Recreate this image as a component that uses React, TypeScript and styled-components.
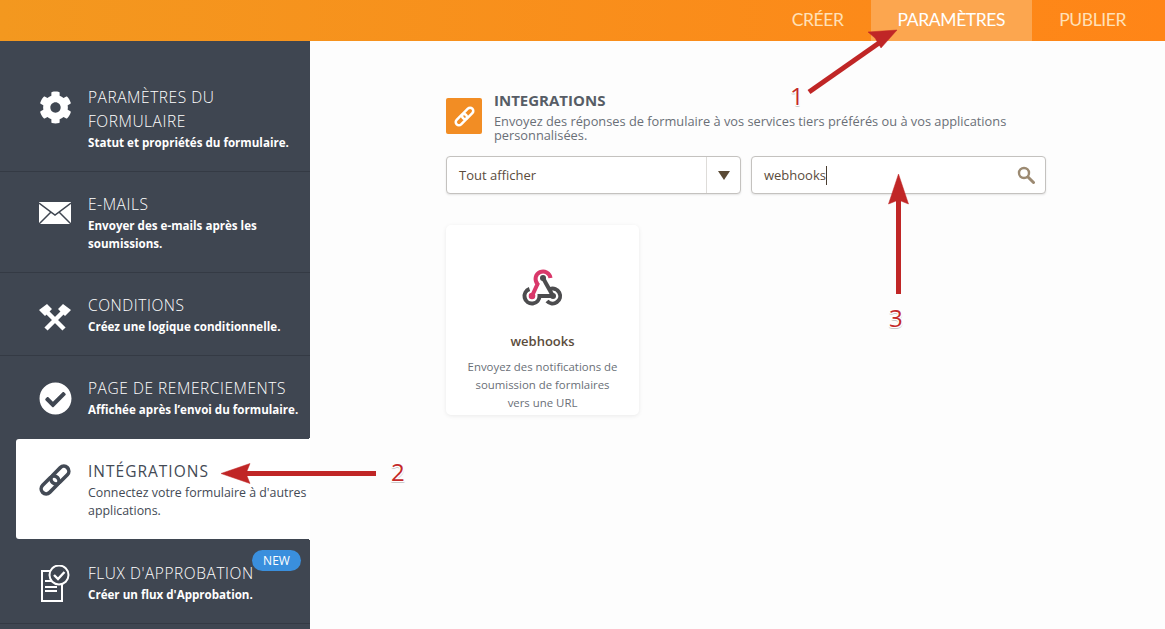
import React from "react";
import styled, { createGlobalStyle } from "styled-components";
import { FaCog, FaCheckCircle } from "react-icons/fa";

const Global = createGlobalStyle`
  html, body { margin: 0; padding: 0; height: 100%; overflow: hidden; background: #fdfdfd; }
  body { font-family: "Open Sans", "Liberation Sans", sans-serif; }
  #root { height: 100%; }
`;

const Page = styled.div`
  position: relative;
  width: 1165px;
  height: 629px;
  overflow: hidden;
  display: flex;
  flex-direction: column;
`;

const TopBar = styled.header`
  flex: 0 0 41px;
  display: flex;
  justify-content: flex-end;
  background: linear-gradient(90deg, #f3981f 0%, #ff8517 100%);
`;

const Tab = styled.div<{ $active?: boolean; $last?: boolean }>`
  display: flex;
  align-items: center;
  padding: 0 ${(p) => (p.$last ? "39px" : "27px")} 2px 27px;
  font-family: "Lato", "Open Sans", sans-serif;
  font-size: 17.5px;
  letter-spacing: -0.4px;
  color: ${(p) => (p.$active ? "#fff" : "#ffe0b8")};
  background: ${(p) => (p.$active ? "#fca64f" : "transparent")};
`;

const Body = styled.div`
  flex: 1;
  display: flex;
  min-height: 0;
`;

const Sidebar = styled.nav`
  flex: 0 0 310px;
  background: #3f4651;
  display: flex;
  flex-direction: column;
`;

const Item = styled.div<{ $active?: boolean; $flat?: boolean; $h: number; $top: number }>`
  position: relative;
  box-sizing: border-box;
  height: ${(p) => p.$h}px;
  display: flex;
  padding: ${(p) => p.$top}px 0 0 ${(p) => (p.$active ? "22px" : "38px")};
  margin-left: ${(p) => (p.$active ? "16px" : "0")};
  gap: 16px;
  background: ${(p) => (p.$active ? "#fff" : "transparent")};
  border-radius: ${(p) => (p.$active ? "3px 0 0 3px" : "0")};
  border-bottom: ${(p) => (p.$active || p.$flat ? "none" : "1px solid #343a44")};
  color: ${(p) => (p.$active ? "#434a55" : "#fff")};

  ${(p) =>
    p.$active
      ? `
    &::before, &::after {
      content: "";
      position: absolute;
      right: 0;
      width: 3px;
      height: 3px;
    }
    &::before {
      top: -3px;
      background: radial-gradient(circle at 0 0, transparent 3px, #fdfdfd 3px);
    }
    &::after {
      bottom: -3px;
      background: radial-gradient(circle at 0 100%, transparent 3px, #fdfdfd 3px);
    }
  `
      : ""}
`;

const IconBox = styled.div<{ $offset: number }>`
  flex: 0 0 34px;
  width: 34px;
  height: 34px;
  margin-top: ${(p) => p.$offset}px;
  display: flex;
  align-items: center;
  justify-content: center;
  font-size: 33px;
`;

const ItemText = styled.div`
  flex: 1;
  min-width: 0;
`;

const ItemTitle = styled.div<{ $active?: boolean }>`
  font-size: 15.5px;
  line-height: 24px;
  letter-spacing: ${(p) => (p.$active ? "1px" : "0.55px")};
  font-weight: ${(p) => (p.$active ? 400 : 300)};
  color: ${(p) => (p.$active ? "#434a55" : "#fff")};
`;

const ItemDesc = styled.div<{ $active?: boolean }>`
  margin-top: 1px;
  font-size: ${(p) => (p.$active ? "12.4px" : "11.6px")};
  line-height: 18px;
  font-weight: ${(p) => (p.$active ? 400 : 700)};
  color: ${(p) => (p.$active ? "#434a55" : "#fff")};
`;

const NewBadge = styled.span`
  position: absolute;
  right: 9px;
  top: 11px;
  width: 49px;
  height: 21px;
  border-radius: 11px;
  background: #3a8fdd;
  color: #fff;
  font-size: 12px;
  line-height: 21px;
  text-align: center;
`;

const Main = styled.main`
  flex: 1;
  padding: 50px 0 0 136px;
  background: #fdfdfd;
`;

const Column = styled.div`
  width: 600px;
`;

const Heading = styled.div`
  display: flex;
  gap: 12px;
`;

const HeadIcon = styled.div`
  flex: 0 0 36px;
  height: 36px;
  margin-top: 7px;
  border-radius: 2px;
  background: #f28d24;
  color: #fff;
  display: flex;
  align-items: center;
  justify-content: center;
`;

const HeadTitle = styled.div`
  font-size: 15px;
  font-weight: 700;
  line-height: 19px;
  color: #575d66;
`;

const HeadText = styled.div`
  font-size: 12.8px;
  line-height: 14px;
  color: #6a6f77;
  margin-top: 4px;
`;

const Controls = styled.div`
  display: flex;
  gap: 10px;
  margin-top: 14px;
`;

const Field = styled.div<{ $w: number }>`
  box-sizing: border-box;
  width: ${(p) => p.$w}px;
  height: 38px;
  background: #fff;
  border: 1px solid #c4c2bf;
  border-radius: 4px;
  box-shadow: 0 1px 2px rgba(0, 0, 0, 0.1);
  display: flex;
  align-items: center;
  font-size: 13px;
  color: #5b4c3c;
`;

const FieldText = styled.div`
  flex: 1;
  padding-left: 12px;
  display: flex;
  align-items: center;
`;

const Caret = styled.span`
  width: 1px;
  height: 19px;
  background: #4a3d30;
`;

const CaretBox = styled.div`
  flex: 0 0 33px;
  height: 100%;
  border-left: 1px solid #dedcd9;
  display: flex;
  align-items: center;
  justify-content: center;
`;

const Triangle = styled.div`
  width: 0;
  height: 0;
  border-left: 6px solid transparent;
  border-right: 6px solid transparent;
  border-top: 9px solid #5a4a35;
`;

const SearchIcon = styled.svg`
  width: 18px;
  height: 18px;
  margin-right: 10px;
`;

const Card = styled.div`
  box-sizing: border-box;
  width: 193px;
  height: 190px;
  margin-top: 31px;
  background: #fff;
  border-radius: 5px;
  box-shadow: 0 1px 4px rgba(0, 0, 0, 0.08);
  text-align: center;
  padding-top: 39px;
  overflow: hidden;
`;

const CardName = styled.div`
  margin-top: 15px;
  font-size: 13px;
  font-weight: 600;
  line-height: 18px;
  color: #5b4c3c;
`;

const CardText = styled.div`
  margin-top: 8px;
  font-size: 11.4px;
  line-height: 18px;
  color: #6a6f77;
  padding: 0 18px;
`;

const Overlay = styled.svg`
  position: absolute;
  inset: 0;
  width: 1165px;
  height: 629px;
  pointer-events: none;
`;

const Marker = styled.div<{ $x: number; $y: number }>`
  position: absolute;
  left: ${(p) => p.$x}px;
  top: ${(p) => p.$y}px;
  font-family: "Open Sans", sans-serif;
  font-weight: 500;
  font-size: 24px;
  line-height: 28px;
  color: #c42a2a;
  text-shadow: 1px 0 0 #fff, -1px 0 0 #fff, 0 -1px 0 #fff, 0 1px 0 #fff, 1px 1px 0 #fff, -1px 1px 0 #fff,
    0 2px 0 #c9c9c9, 1px 2px 0 #d8d8d8, -1px 2px 0 #d8d8d8;
`;

const Envelope = () => (
  <svg width="32" height="22" viewBox="0 0 32 22">
    <rect width="32" height="22" fill="#fff" />
    <path fill="none" stroke="#3f4651" strokeWidth="1.500" d="M0 1l16 12L32 1M0 22l12-12M32 22L20 10" />
  </svg>
);

const Tools = () => (
  <svg width="32" height="27" viewBox="0 0 32 27" fill="#fff">
    <path stroke="#fff" strokeWidth="4.500" d="M7 7l18 18M25 7L7 25" />
    <path d="M8 0l5 5-7 7-6-6zM24 0l-5 5 7 7 6-6z" />
  </svg>
);

const ChainIcon = ({ size, weight }: { size: number; weight: number }) => (
  <svg width={size} height={size} viewBox="0 0 30 30" fill="none" stroke="currentColor" strokeWidth={weight} overflow="visible">
    <g transform="rotate(-45 15 15)">
      <rect x="-2.500" y="10" width="21" height="10" rx="5" />
      <rect x="11.500" y="10" width="21" height="10" rx="5" />
    </g>
  </svg>
);

const Approval = () => (
  <svg width="32" height="37" viewBox="0 0 32 37" fill="none" stroke="#fff">
    <rect x="3" y="6" width="20" height="30" strokeWidth="2" />
    <path strokeWidth="1.800" d="M6 16h7M6 22h12M6 26h12" />
    <circle cx="20" cy="10" r="9.500" strokeWidth="2" fill="#3f4651" />
    <path strokeWidth="2.400" d="M15 10l4 4 6.500-7" />
  </svg>
);

const WebhookIcon = () => (
  <svg width="48" height="48" viewBox="0 0 48 48" fill="none">
    <path stroke="#4c4c4e" strokeWidth="4" d="M24 14l10 18" />
    <path stroke="#4c4c4e" strokeWidth="4" d="M10.500 25A7.500 7.500 0 1 0 20.500 32H34" />
    <path stroke="#4c4c4e" strokeWidth="4" d="M31 25A7.500 7.500 0 1 1 28 37" />
    <circle cx="24" cy="14" r="3" fill="#4c4c4e" />
    <circle cx="34" cy="32" r="3" fill="#4c4c4e" />
    <path stroke="#d9386a" strokeWidth="4" d="M13 32l5.500-12A7.500 7.500 0 1 1 31.500 14" />
    <circle cx="13" cy="32" r="3.300" fill="#d9386a" />
  </svg>
);

type Row = {
  title: string;
  desc: string;
  h: number;
  top: number;
  iconOffset: number;
  icon: React.ReactNode;
  active?: boolean;
  badge?: boolean;
  flat?: boolean;
};

const rows: Row[] = [
  { title: "PARAMÈTRES DU FORMULAIRE", desc: "Statut et propriétés du formulaire.", h: 131, top: 44, iconOffset: 5, icon: <FaCog /> },
  { title: "E-MAILS", desc: "Envoyer des e-mails après les soumissions.", h: 101, top: 20, iconOffset: 4, icon: <Envelope /> },
  { title: "CONDITIONS", desc: "Créez une logique conditionnelle.", h: 83, top: 20, iconOffset: 7, icon: <Tools /> },
  { title: "PAGE DE REMERCIEMENTS", desc: "Affichée après l’envoi du formulaire.", h: 83, top: 20, iconOffset: 5, icon: <FaCheckCircle />, flat: true },
  { title: "INTÉGRATIONS", desc: "Connectez votre formulaire à d'autres applications.", h: 100, top: 20, iconOffset: 4, icon: <ChainIcon size={30} weight={3.6} />, active: true },
  { title: "FLUX D'APPROBATION", desc: "Créer un flux d'Approbation.", h: 85, top: 22, iconOffset: 5, icon: <Approval />, badge: true },
];

export default function App() {
  return (
    <Page>
      <Global />
      <TopBar>
        <Tab>CRÉER</Tab>
        <Tab $active>PARAMÈTRES</Tab>
        <Tab $last>PUBLIER</Tab>
      </TopBar>
      <Body>
        <Sidebar>
          {rows.map((r) => (
            <Item key={r.title} $active={r.active} $flat={r.flat} $h={r.h} $top={r.top}>
              <IconBox $offset={r.iconOffset}>{r.icon}</IconBox>
              <ItemText>
                <ItemTitle $active={r.active}>{r.title}</ItemTitle>
                <ItemDesc $active={r.active}>{r.desc}</ItemDesc>
              </ItemText>
              {r.badge && <NewBadge>NEW</NewBadge>}
            </Item>
          ))}
        </Sidebar>
        <Main>
          <Column>
            <Heading>
              <HeadIcon><ChainIcon size={19} weight={4} /></HeadIcon>
              <div>
                <HeadTitle>INTEGRATIONS</HeadTitle>
                <HeadText>Envoyez des réponses de formulaire à vos services tiers préférés ou à vos applications personnalisées.</HeadText>
              </div>
            </Heading>
            <Controls>
              <Field $w={295}>
                <FieldText>Tout afficher</FieldText>
                <CaretBox><Triangle /></CaretBox>
              </Field>
              <Field $w={295}>
                <FieldText>webhooks<Caret /></FieldText>
                <SearchIcon viewBox="0 0 18 18" fill="none" stroke="#9c8a72">
                  <circle cx="7" cy="7" r="5" strokeWidth="2.400" />
                  <path d="M11 11l5.500 5.500" strokeWidth="3" strokeLinecap="round" />
                </SearchIcon>
              </Field>
            </Controls>
            <Card>
              <WebhookIcon />
              <CardName>webhooks</CardName>
              <CardText>Envoyez des notifications de soumission de formlaires vers une URL</CardText>
            </Card>
          </Column>
        </Main>
      </Body>
      <Overlay viewBox="0 0 1165 629">
        <g fill="#c02626" stroke="#c02626">
          <path strokeWidth="5" d="M809 92l70-49" />
          <path strokeWidth="0.500" d="M897 30l-29 2 7 6 6 10z" />
          <path strokeWidth="5" d="M376 473.500H240" />
          <path strokeWidth="0.500" d="M221 473.500l29-10-4 10 4 10z" />
          <path strokeWidth="5" d="M898.500 294V195" />
          <path strokeWidth="0.500" d="M898.500 174l-10 30 10-4 10 4z" />
        </g>
      </Overlay>
      <Marker $x={790} $y={82}>1</Marker>
      <Marker $x={391} $y={458}>2</Marker>
      <Marker $x={889} $y={304}>3</Marker>
    </Page>
  );
}
